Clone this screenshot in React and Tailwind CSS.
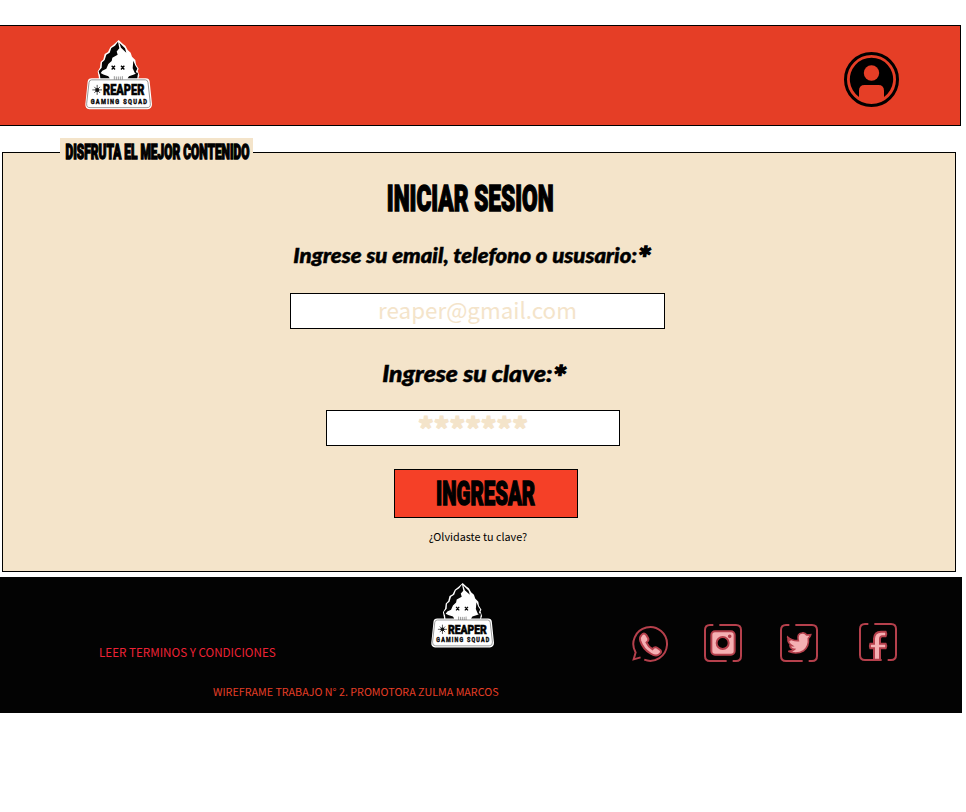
import React from "react";

const display = "font-['Roboto','Liberation_Sans',sans-serif] font-black";
const body = "font-['Noto_Sans_CJK_JP','Noto_Sans',sans-serif]";

// Stretches a line of text horizontally around its centre.
function Fit({ scale, className, children }) {
  return (
    <span className={`inline-block whitespace-nowrap ${className}`} style={{ transform: `scaleX(${scale})` }}>
      {children}
    </span>
  );
}

function Star() {
  return <span className="align-[-6px] text-[31px] leading-[0] [-webkit-text-stroke:1.3px_black]">*</span>;
}

function Logo({ className }) {
  return (
    <svg viewBox="0 0 201 209" preserveAspectRatio="none" className={`overflow-visible ${className}`}>
      <path
        d="M101 0 L113 11 L121 17 L128 30 L137 38 L141 50 L151 60 L153 73 L161 86 L158 92 L163 106 L160 114 H182 Q193 114 194 124 L201 192 Q201 206 188 207 H13 Q0 206 1 192 L8 124 Q9 114 20 114 H42 L38 94 L45 82 L47 66 L55 58 L59 42 L69 36 L76 22 L88 12 Z"
        fill="#fff"
      />
      <path
        d="M99 5 L90 17 L79 24 L74 38 L64 44 L59 60 L51 67 L50 83 L41 93 L44 103 L52 92 L64 86 L70 72 L80 63 L82 53 L98 44 L95 34 L103 25 Z"
        fill="#060606"
      />
      <path d="M103 8 L120 25 L124 38 L108 23 Z M145 62 L151 76 L157 85 L153 94 L160 106 L149 98 L143 84 Z" fill="#060606" />
      <path d="M44 97 L55 103 L70 108 L74 114 H46 Z M159 97 L147 103 L132 108 L128 114 H157 Z" fill="#060606" />
      <path
        d="M80 77 L90 88 M90 77 L80 88 M108 77 L118 88 M118 77 L108 88"
        stroke="#060606"
        strokeWidth="4"
      />
      <path d="M88 108 V119 M94 109 V120 M100 109 V121 M106 109 V120 M112 108 V119" stroke="#666" strokeWidth="2" />
      <path
        d="M20 119 H181 Q188 119 189 127 L196 190 Q197 202 186 202 H15 Q4 202 5 190 L12 127 Q13 119 20 119 Z"
        fill="#fff"
        stroke="#666"
        strokeWidth="2"
      />
      <path d="M22 149 H51 M36.500 134 V164 M28 140 L45 158 M45 140 L28 158" stroke="#333" strokeWidth="2.500" />
      <circle cx="36.500" cy="149" r="6" fill="#111" />
      <text
        x="54"
        y="163"
        textLength="124"
        lengthAdjust="spacingAndGlyphs"
        fontSize="43"
        stroke="#080808"
        strokeWidth="2"
        className="font-['Roboto',sans-serif] font-black"
      >
        REAPER
      </text>
      <text
        x="23"
        y="190"
        transform="scale(0.74 1)"
        textLength="228"
        fontSize="23"
        lengthAdjust="spacing"
        stroke="#111"
        strokeWidth="1.500"
        className="font-['Roboto',sans-serif] font-bold"
      >
        GAMING SQUAD
      </text>
    </svg>
  );
}

function Avatar() {
  return (
    <svg viewBox="0 0 165 165" className="h-[55px] w-[55px]">
      <circle cx="82.500" cy="82.500" r="78" fill="none" stroke="#000" strokeWidth="9" />
      <path
        d="M45 135 A65 65 0 1 1 120 135 V116 Q120 99 103 99 H62 Q45 99 45 116 Z"
        fill="#000"
      />
      <circle cx="82.500" cy="63" r="23" fill="#e53e26" />
    </svg>
  );
}

const line = "#b5404c";
const pink = "#f5b0b3";

function WhatsApp() {
  return (
    <svg viewBox="0 0 112 112" className="mt-[2px] h-[37px] w-[37px]" fill="none" stroke={line} strokeWidth="6">
      <path d="M37 102 A51 51 0 1 0 11 80 L5 101 L26 95" />
      <path
        d="M29 27 Q36 19 43 27 L49 37 Q52 43 44 50 Q49 62 62 70 Q69 61 76 66 L86 73 Q91 80 83 85 Q74 94 57 84 Q33 70 25 45 Q22 34 29 27 Z"
        fill={pink}
      />
    </svg>
  );
}

function Frame({ children, className }) {
  return (
    <svg viewBox="0 0 114 114" className={`h-[38px] w-[38px] ${className}`} fill="none" stroke={line} strokeWidth="6">
      <path d="M28 3 H18 Q3 3 3 18 V96 Q3 111 18 111 H68 M86 111 H96 Q111 111 111 96 V18 Q111 3 96 3 H46" />
      {children}
    </svg>
  );
}

function Field({ className, children }) {
  return <div className={`flex justify-center border border-black bg-white text-[#f4e4ca] ${className}`}>{children}</div>;
}

export default function App() {
  return (
    <div className={`min-h-[812px] w-[966px] overflow-hidden bg-white pt-[25px] text-black ${body}`}>
      <header className="flex h-[101px] w-[961px] justify-between border border-l-0 border-black bg-[#e53e26] pr-[61px] pl-[85px]">
        <Logo className="mt-[14px] h-[70px] w-[67px]" />
        <div className="mt-[26px]">
          <Avatar />
        </div>
      </header>

      <fieldset className="mt-3 ml-[2px] h-[434px] w-[954px] border border-black bg-[#f4e4ca]">
        <legend className="ml-[57px] flex h-[29px] w-[193px] items-center justify-center bg-[#f4e4ca] pl-px">
          <Fit scale={0.595} className={`${display} text-[20px] leading-[29px] [-webkit-text-stroke:1.4px_black]`}>
            DISFRUTA EL MEJOR CONTENIDO
          </Fit>
        </legend>
        <div className="flex flex-col items-center">
          <h1 className="mt-[9px] mr-[17px] h-[46px]">
            <Fit scale={0.612} className={`${display} text-[37px] leading-[46px] [-webkit-text-stroke:1.5px_black]`}>
              INICIAR SESION
            </Fit>
          </h1>
          <label className="mt-[17px] mr-[13px] h-[32px]">
            <Fit scale={1.11} className="font-['Lato',sans-serif] text-[20px] leading-[32px] font-black italic [-webkit-text-stroke:0.5px_black]">
              Ingrese su email, telefono o ususario:<Star />
            </Fit>
          </label>
          <Field className="mt-[22px] mr-[3px] h-[36px] w-[375px]">
            <Fit scale={1} className="text-[22.400px] leading-[30px]">reaper@gmail.com</Fit>
          </Field>
          <label className="mt-[29px] mr-[10px] h-[32px]">
            <Fit scale={1.12} className="font-['Lato',sans-serif] text-[22px] leading-[32px] font-black italic [-webkit-text-stroke:0.5px_black]">
              Ingrese su clave:<Star />
            </Fit>
          </label>
          <Field className="mt-[20px] mr-[12px] h-[36px] w-[294px]">
            <Fit scale={1} className="text-[29.700px] leading-[33px] font-black [-webkit-text-stroke:1px_#f4e4ca]">*******</Fit>
          </Field>
          <button className="mt-[23px] ml-[14px] flex h-[49px] w-[184px] items-center justify-center border border-black bg-[#f54027]">
            <Fit scale={0.6} className={`${display} text-[34px] leading-[47px] [-webkit-text-stroke:1.5px_black]`}>
              INGRESAR
            </Fit>
          </button>
          <a className="mt-[8px] mr-[2px] h-[20px] text-[10.800px] leading-[20px]">¿Olvidaste tu clave?</a>
        </div>
      </fieldset>

      <footer className="mt-[5px] flex h-[136px] w-[962px] bg-[#030303]">
        <div className="w-[632px]">
          <div className="flex h-[104px]">
            <div className="w-[431px] pt-[65px] pl-[99px] text-[11.650px] leading-5 text-[#ed2235]">
              LEER TERMINOS Y CONDICIONES
            </div>
            <Logo className="mt-[6px] h-[65px] w-[63px]" />
          </div>
          <div className="pl-[213px] text-[10.740px] leading-[22px] text-[#e53e26]">
            WIREFRAME TRABAJO N° 2. PROMOTORA ZULMA MARCOS
          </div>
        </div>
        <div className="flex items-start pt-[47px]">
          <WhatsApp />
          <Frame className="ml-[35px]">
            <rect x="22" y="22" width="70" height="70" rx="11" fill={pink} />
            <circle cx="56" cy="57" r="18" fill="#030303" />
            <circle cx="77" cy="37" r="2.500" fill={line} />
          </Frame>
          <Frame className="ml-[38px]">
            <path
              d="M23 39 Q36 51 55 50 Q50 28 66 27 Q75 25 80 33 L92 32 Q90 39 85 43 Q88 66 71 80 Q50 93 25 82 Q37 82 43 76 Q31 75 30 65 L36 65 Q23 56 24 47 L31 50 Q22 43 23 39 Z"
              fill={pink}
              strokeWidth="5"
            />
          </Frame>
          <Frame className="-mt-px ml-[41px]">
            <path
              d="M45 110 V76 H34 Q31 69 34 62 H45 V47 Q46 26 66 26 H80 Q84 33 80 40 H69 Q63 41 63 48 V62 H80 Q84 69 80 76 H63 V110 Z"
              fill={pink}
            />
          </Frame>
        </div>
      </footer>
    </div>
  );
}
